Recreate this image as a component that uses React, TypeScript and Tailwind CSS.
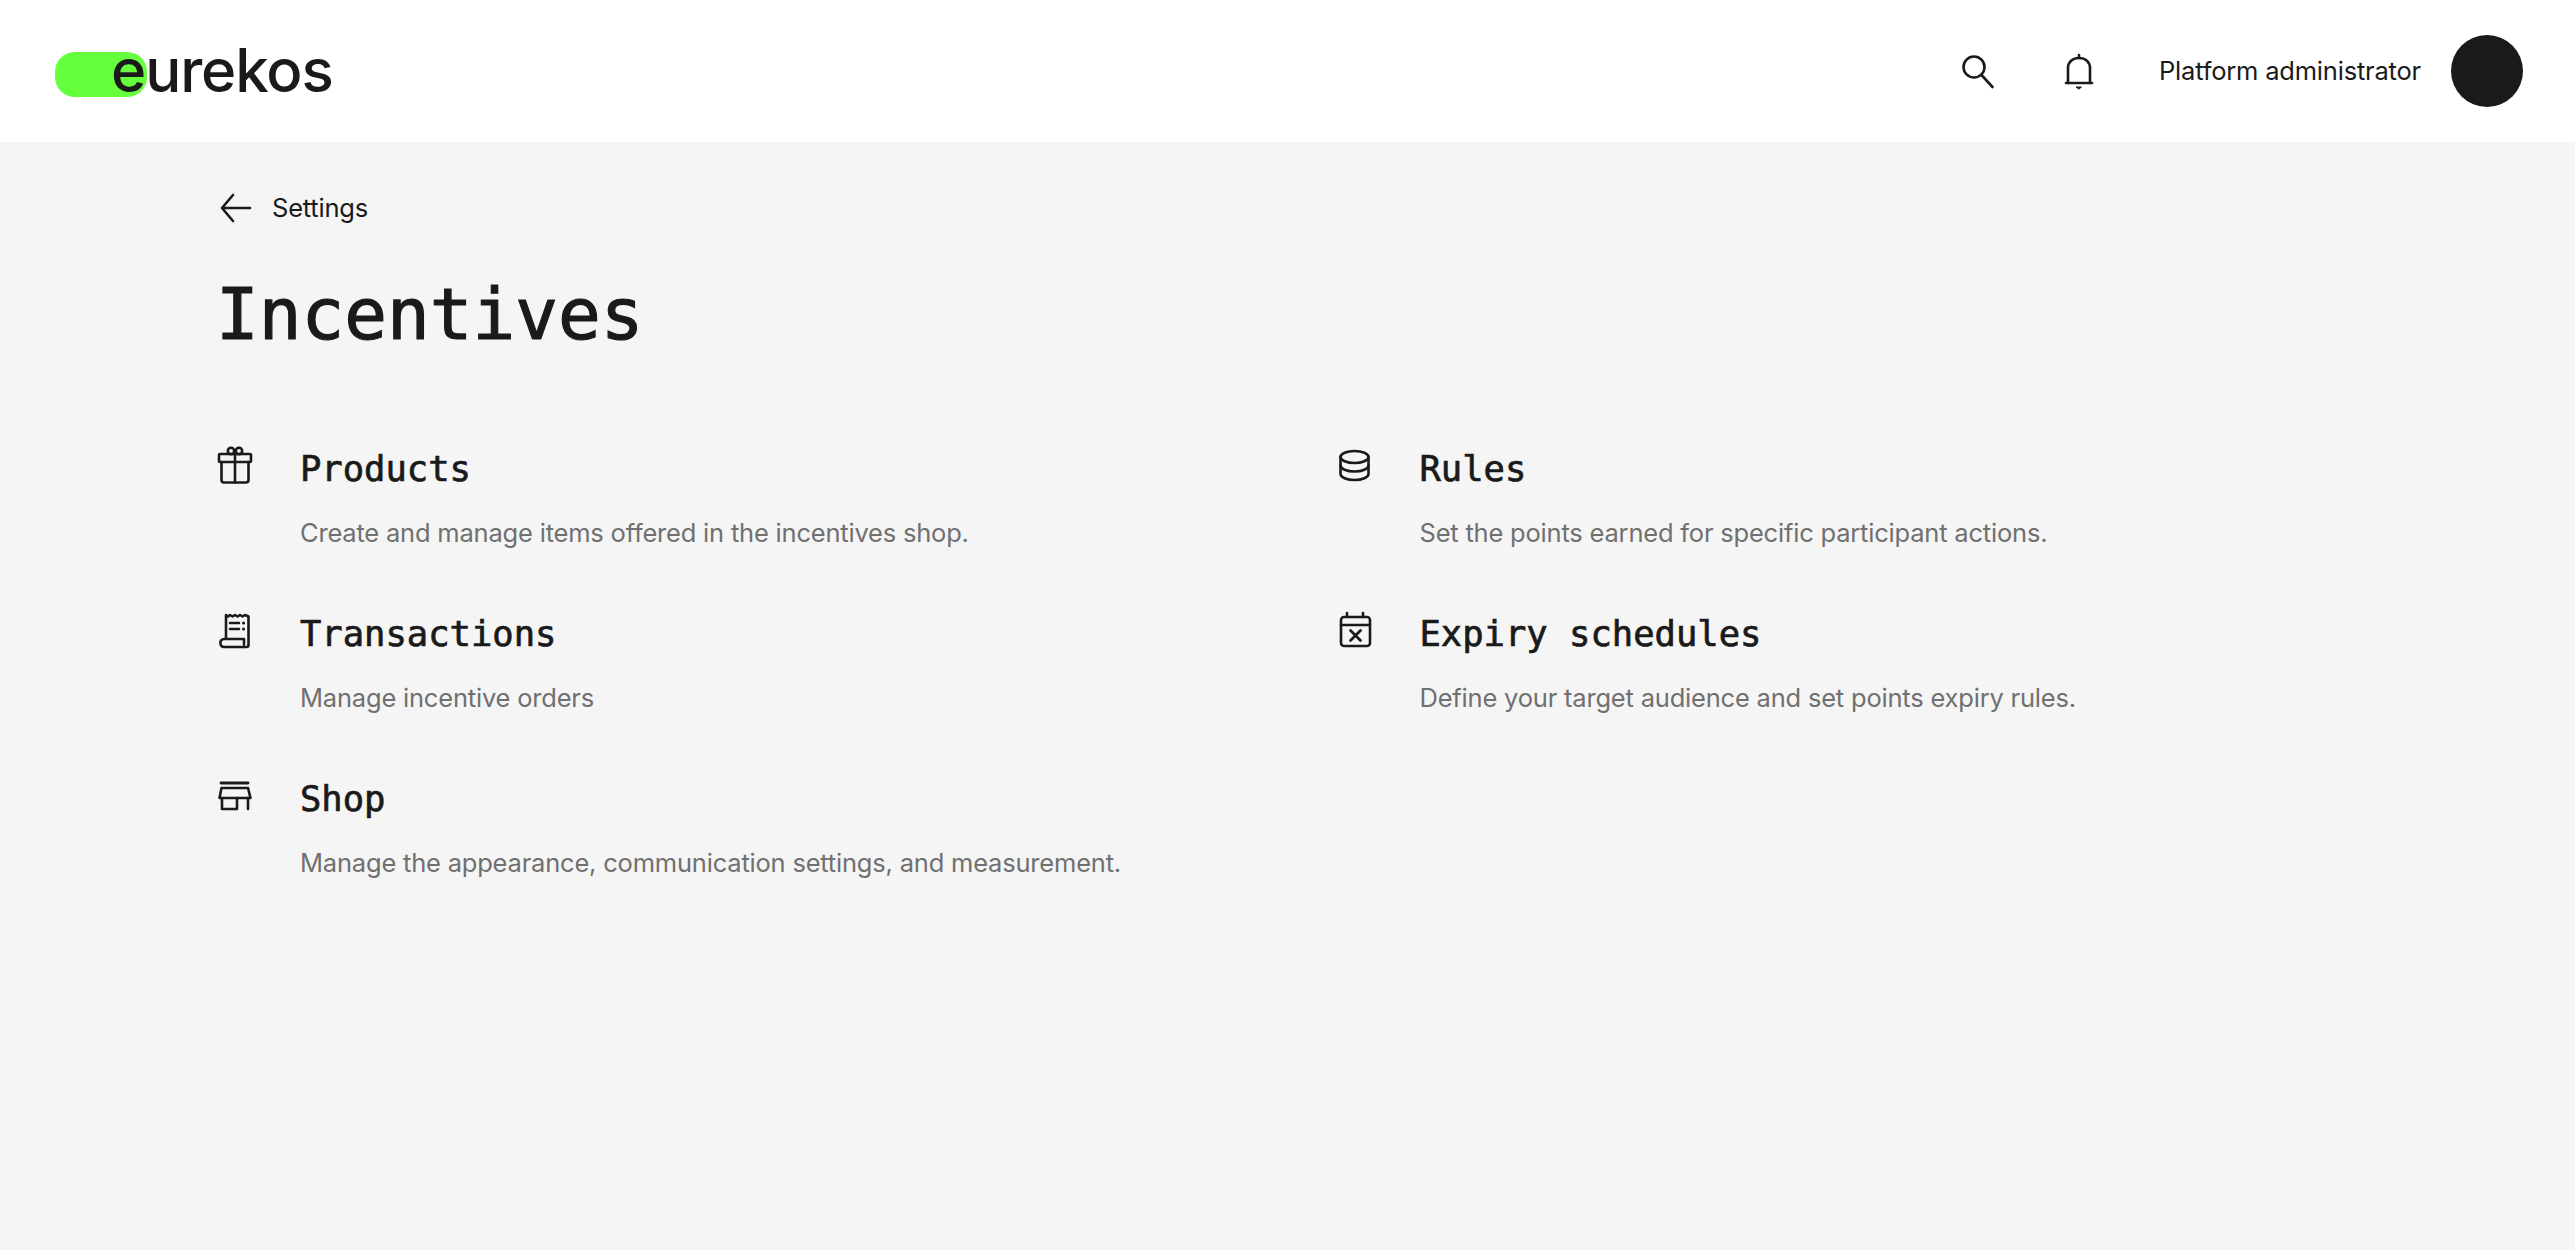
import React from 'react';

interface Item {
  title: string;
  description: string;
  icon: React.ReactNode;
}

const Glyph: React.FC<{ children: React.ReactNode }> = ({ children }) => (
  <svg viewBox="0 0 40 40" fill="none" stroke="#1a1a1a" strokeWidth="2.6" strokeLinecap="round" strokeLinejoin="round" className="w-10 h-10 shrink-0">
    {children}
  </svg>
);

const GiftIcon = () => (
  <Glyph>
    <rect x="3" y="9" width="32" height="8" rx="1" />
    <path d="M5.5 17v18a2.5 2.5 0 0 0 2.5 2.5h22a2.5 2.5 0 0 0 2.5-2.5V17" />
    <path d="M19 9v28.5" />
    <circle cx="15" cy="6" r="3.2" />
    <circle cx="23" cy="6" r="3.2" />
  </Glyph>
);

const ReceiptIcon = () => (
  <Glyph>
    <path d="M10 29V5l2 1.5L14 5l2.500 1.500L19 5l2.500 1.500L24 5l2.500 1.500L29 5l3.500 1.500V35a2 2 0 0 1-2 2H8a3.500 3.500 0 0 1-3.500-4A3.500 3.500 0 0 1 8 29h20v5.500" />
    <path d="M14 13h9M14 19h9" />
    <path d="M27.500 13h.1M27.500 19h.1" strokeWidth="3" />
  </Glyph>
);

const StoreIcon = () => (
  <Glyph>
    <path d="M5 8h27" strokeWidth="2.800" />
    <path d="M5.500 13h26.500l2.500 10h-31z" />
    <path d="M6 23v11h15V23M32 23v11" />
  </Glyph>
);

const DatabaseIcon = () => (
  <Glyph>
    <ellipse cx="18.500" cy="12" rx="14" ry="6" />
    <path d="M4.500 12v17c0 3.300 6.300 6 14 6s14-2.700 14-6V12" />
    <path d="M4.500 20.500c0 3.300 6.300 6 14 6s14-2.700 14-6" />
  </Glyph>
);

const CalendarIcon = () => (
  <Glyph>
    <rect x="5" y="7" width="29" height="29" rx="3" />
    <path d="M5 15h29M11 3v4M27 3v4" />
    <path d="M14.500 20.500l10 10M24.500 20.500l-10 10" strokeWidth="2.800" />
  </Glyph>
);

const left: Item[] = [
  { title: 'Products', description: 'Create and manage items offered in the incentives shop.', icon: <GiftIcon /> },
  { title: 'Transactions', description: 'Manage incentive orders', icon: <ReceiptIcon /> },
  { title: 'Shop', description: 'Manage the appearance, communication settings, and measurement.', icon: <StoreIcon /> },
];

const right: Item[] = [
  { title: 'Rules', description: 'Set the points earned for specific participant actions.', icon: <DatabaseIcon /> },
  { title: 'Expiry schedules', description: 'Define your target audience and set points expiry rules.', icon: <CalendarIcon /> },
];

const Entry: React.FC<{ item: Item }> = ({ item }) => (
  <div className="flex gap-[44px] h-[165px]">
    {item.icon}
    <div>
      <h3 className="font-['DejaVu_Sans_Mono',monospace] text-[35.500px] leading-[48px] text-[#1a1a1a] [-webkit-text-stroke:0.7px_#1a1a1a]">{item.title}</h3>
      <p className="text-[25.500px] tracking-[-0.2px] leading-[40px] text-[#707070] mt-[20px]">{item.description}</p>
    </div>
  </div>
);

export default function App() {
  return (
    <div className="min-h-[1250px] bg-[#f5f5f5] font-['Inter',sans-serif]">
      <header className="h-[142px] bg-white flex items-center justify-between pl-[55px] pr-[52px]">
        <div className="relative h-[72px] flex items-center pl-[56px]">
          <span className="absolute left-0 top-[17px] w-[92px] h-[45px] rounded-[20px] bg-[#66ff3d]" />
          <span className="relative text-[60px] leading-[72px] font-medium tracking-[-1.100px] text-[#1a1a1a] -mt-[3px]">eurekos</span>
        </div>
        <div className="flex items-center">
          <svg viewBox="0 0 40 40" fill="none" stroke="#1a1a1a" strokeWidth="2.600" strokeLinecap="round" className="w-10 h-10">
            <circle cx="16" cy="16" r="10.500" />
            <path d="M23.500 24l11 12" />
          </svg>
          <svg viewBox="0 0 40 40" fill="none" stroke="#1a1a1a" strokeWidth="2.600" strokeLinecap="round" strokeLinejoin="round" className="w-10 h-10 ml-[61px]">
            <path d="M9 32V17c0-6 4.500-10 11-10s11 4 11 10v15" />
            <path d="M20 4v3M7 32h26" />
            <path d="M17.500 36h5l-2.500 2z" fill="#1a1a1a" strokeWidth="1" />
          </svg>
          <span className="ml-[60px] text-[25.500px] tracking-[-0.2px] leading-[40px] text-[#1a1a1a]">Platform administrator</span>
          <div className="ml-[30px] w-[72px] h-[72px] rounded-full bg-[#1a1a1a]" />
        </div>
      </header>
      <main className="px-[216px]">
        <div className="flex items-center gap-[20px] pt-[46px]">
          <svg viewBox="0 0 36 36" fill="none" stroke="#1a1a1a" strokeWidth="2.600" strokeLinecap="round" strokeLinejoin="round" className="w-9 h-9">
            <path d="M6 18h28M17 5L6 18l11 13" />
          </svg>
          <span className="text-[25.500px] tracking-[-0.2px] leading-[40px] text-[#1a1a1a]">Settings</span>
        </div>
        <h1 className="font-['DejaVu_Sans_Mono',monospace] text-[71px] leading-[88px] text-[#1a1a1a] [-webkit-text-stroke:1.200px_#1a1a1a] mt-[43px]">Incentives</h1>
        <div className="grid grid-cols-2 gap-x-[96px] mt-[86px]">
          <div>
            {left.map(item => <Entry key={item.title} item={item} />)}
          </div>
          <div>
            {right.map(item => <Entry key={item.title} item={item} />)}
          </div>
        </div>
      </main>
    </div>
  );
}
